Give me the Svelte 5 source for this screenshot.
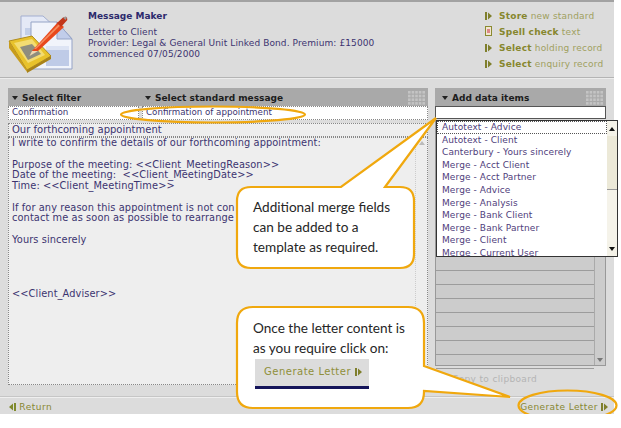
<script>
  const links = [
    { strong: 'Store', rest: 'new standard', icon: 'arrow' },
    { strong: 'Spell check', rest: 'text', icon: 'doc' },
    { strong: 'Select', rest: 'holding record', icon: 'arrow' },
    { strong: 'Select', rest: 'enquiry record', icon: 'arrow' }
  ];
  const items = [
    'Autotext - Advice', 'Autotext - Client', 'Canterbury - Yours sincerely',
    'Merge - Acct Client', 'Merge - Acct Partner', 'Merge - Advice', 'Merge - Analysis',
    'Merge - Bank Client', 'Merge - Bank Partner', 'Merge - Client', 'Merge - Current User'
  ];
  // the callout covers the ends of the two long lines, so they stop where it starts
  const letter = [
    'I write to confirm the details of our forthcoming appointment:',
    '',
    'Purpose of the meeting: <<Client_MeetingReason>>',
    'Date of the meeting:  <<Client_MeetingDate>>',
    'Time: <<Client_MeetingTime>>',
    '',
    'If for any reason this appointment is not con',
    'contact me as soon as possible to rearrange',
    '',
    'Yours sincerely',
    '', '', '', '',
    '<<Client_Adviser>>'
  ];
  const rows = Array(8);
</script>

{#snippet dots()}
  <svg class="dots" width="18" height="15" viewBox="0 0 18 15">
    {#each [0, 1, 2, 3] as r}
      {#each [0, 1, 2, 3, 4] as c}
        <rect x={c * 3.6} y={r * 3.7} width="2.6" height="2.6" fill="#c4c4c4" />
      {/each}
    {/each}
  </svg>
{/snippet}

{#snippet play(back = false)}
  <svg class="play" width="7" height="8" viewBox="0 0 7 8">
    {#if back}
      <path d="M5 0v8h2V0zM4 .5v7L0 4z" fill="#7f8a2c" />
    {:else}
      <path d="M0 0v8h2V0zM3 .5v7L7 4z" fill="#7f7f2c" />
    {/if}
  </svg>
{/snippet}

<div class="app">
  <header>
    <svg class="logo" width="70" height="62" viewBox="6 12 70 62">
      <path d="M21 16h22l11 10v34H21z" fill="#e4e9f6" stroke="#a3afd0" />
      <rect x="25" y="28" width="10" height="7" fill="#c3cfe8" />
      <path d="M31 22h26l15 17v30H31z" fill="#f1f4fb" stroke="#95a3c6" />
      <path d="M57 22v17h15z" fill="#c1cdea" stroke="#95a3c6" />
      <rect x="46" y="46" width="23" height="20" fill="#bfcbe7" />
      <rect x="46" y="46" width="23" height="4" fill="#dde4f4" />
      <path d="M9 41 32 36 51 56 27 70z" fill="#e8c22c" stroke="#b08c1c" />
      <path d="M14 43 32 39 45 55 28 63z" fill="#f3dc72" />
      <path d="M20 47 32 44 41 54 28 60z" fill="#8f8d7e" />
      <path d="M9 41v7l18 24v-2z" fill="#c89c1c" />
      <path d="M27 70v3L51 59v-3z" fill="#a8821a" />
      <path d="M32 51 58 22l6 5-26 24z" fill="#e8481c" />
      <path d="M34 49 59 24l1.500 1.200L36 49z" fill="#f58a5c" />
      <path d="M57 23 63 17.500q3-1.500 4 0 1 2-1 4L61 27z" fill="#c2361a" />
      <path d="M63 17.500q3-1.500 4 0l-1.500 2.500z" fill="#9a9a9a" />
      <path d="M32 51l-2.500 5 8.500-5z" fill="#eed6b0" />
    </svg>
    <div class="title">
      <h1>Message Maker</h1>
      <p>Letter to Client</p>
      <p>Provider: Legal &amp; General Unit Linked Bond. Premium: £15000</p>
      <p>commenced 07/05/2000</p>
    </div>
    <ul class="links">
      {#each links as l}
        <li>
          {#if l.icon === 'doc'}
            <svg class="play" width="7" height="10" viewBox="0 0 7 10">
              <rect x=".5" y=".5" width="6" height="9" fill="#f2e6d0" stroke="#8a8a30" />
              <rect x="2" y="3" width="3" height="4" fill="#d88" />
            </svg>
          {:else}
            {@render play()}
          {/if}
          <b>{l.strong}</b> {l.rest}
        </li>
      {/each}
    </ul>
  </header>

  <main>
    <section class="left">
      <div class="bar">
        <span class="filter-head"><i class="caret"></i>Select filter</span>
        <span class="grow"><i class="caret"></i>Select standard message</span>
        {@render dots()}
      </div>
      <div class="selects">
        <div class="field">Confirmation</div>
        <div class="field">Confirmation of appointment</div>
      </div>
      <div class="field subject">Our forthcoming appointment</div>
      <div class="letter">
        <div class="lines">
          {#each letter as line}
            <div class="line">{line}</div>
          {/each}
        </div>
        <div class="track"><i class="caret up"></i></div>
      </div>
    </section>

    <section class="right">
      <div class="bar"><span class="grow"><i class="caret"></i>Add data items</span>{@render dots()}</div>
      <div class="input"></div>
      <div class="stack">
        <div class="rows">
          {#each rows as _}<div class="row"></div>{/each}
        </div>
        <div class="rows-track"><i class="caret small"></i></div>
        <div class="list">
          <ul>
            {#each items as item, i}
              <li class:active={i === 0}>{item}</li>
            {/each}
          </ul>
          <div class="scroll">
            <span class="sbtn"><i class="caret up black"></i></span>
            <span class="thumb"></span>
            <span class="rest"></span>
            <span class="sbtn end"><i class="caret black"></i></span>
          </div>
        </div>
      </div>
      <div class="copy">Copy to clipboard</div>
    </section>
  </main>

  <footer>
    <span class="foot-link back">{@render play(true)} Return</span>
    <span class="foot-link">Generate Letter {@render play()}</span>
  </footer>

  <svg class="marks" width="621" height="428" viewBox="0 0 621 428">
    <g fill="none" stroke="#f0a80e" stroke-width="2.2">
      <ellipse cx="213" cy="114.5" rx="92" ry="8" />
      <ellipse cx="567.5" cy="405.5" rx="49" ry="15" />
      <path fill="#fff" d="M251 187H341L436 118 385 187H400Q414 187 414 201V254Q414 268 400 268H251Q237 268 237 254V201Q237 187 251 187Z" />
      <path fill="#fff" d="M253 307H408Q424 307 424 323V366L510 397 424 391V392Q424 408 408 408H253Q237 408 237 392V323Q237 307 253 307Z" />
    </g>
  </svg>

  <div class="callout one">Additional merge fields can be added to a template as required.</div>
  <div class="callout two">
    Once the letter content is as you require click on:
    <div class="sample"><span>Generate Letter {@render play()}</span></div>
  </div>
</div>

<style>
  :global(body) {
    background: #fff;
  }

  .app {
    position: relative;
    width: 614px;
    height: 414px;
    background: #dcdcdc;
    border-top: 2px solid #a2a2a2;
    box-sizing: border-box;
    display: flex;
    flex-direction: column;
    overflow: visible;
    font: 9px/12px "DejaVu Sans", Verdana, sans-serif;
    color: #3c3470;
  }

  header {
    display: flex;
    height: 75px;
    border-bottom: 1px solid #b4b4b4;
    box-shadow: 0 1px 0 #ececec;
    flex: none;
  }

  .logo {
    margin: 10px 0 0 6px;
    flex: none;
  }

  .title {
    margin: 8px 0 0 12px;
    flex: 1;
    letter-spacing: 0.1px;
  }

  h1 {
    margin: 0 0 5px;
    font-size: 9px;
    line-height: 12px;
    color: #2c2a6c;
    letter-spacing: 0;
  }

  .title p {
    margin: 0;
    line-height: 11px;
  }

  .links {
    list-style: none;
    margin: 7px 0 0;
    padding: 0;
    width: 129px;
    color: #a0a060;
    letter-spacing: 0.2px;
  }

  .links li {
    height: 16px;
    line-height: 14px;
    white-space: nowrap;
  }

  .links b {
    color: #87872e;
    margin-left: 4px;
  }

  .play {
    vertical-align: -1px;
  }

  main {
    flex: 1;
    display: flex;
    gap: 7px;
    padding: 10px 8px 0;
    min-height: 0;
  }

  .left {
    width: 420px;
    display: flex;
    flex-direction: column;
  }

  .right {
    width: 171px;
    display: flex;
    flex-direction: column;
  }

  .bar {
    height: 18px;
    flex: none;
    background: #a9a9a9;
    display: flex;
    align-items: center;
    padding: 2px 2px 0 4px;
    font-weight: bold;
    color: #1c1c1c;
    box-sizing: border-box;
  }

  .right .bar {
    padding-left: 7px;
  }

  .filter-head {
    width: 133px;
  }

  .grow {
    flex: 1;
  }

  .caret {
    display: inline-block;
    width: 0;
    height: 0;
    margin-right: 4px;
    border: 3px solid transparent;
    border-top: 4px solid #222;
    border-bottom: 0;
    vertical-align: 1px;
  }

  .caret.up {
    border-top: 0;
    border-bottom: 4px solid #bbb;
    margin: 0;
  }

  .caret.black {
    margin: 0;
    border-top-color: #111;
  }

  .caret.up.black {
    border-bottom-color: #111;
  }

  .caret.small {
    margin: 0;
    border-top-color: #777;
  }

  .selects {
    display: flex;
    flex: none;
    gap: 3px;
  }

  .field {
    height: 12px;
    line-height: 11px;
    background: #fff;
    border: 1px dotted #888;
    padding-left: 3px;
    box-sizing: content-box;
    white-space: nowrap;
  }

  .selects .field {
    font-size: 8.7px;
  }

  .selects .field:first-child {
    width: 126px;
  }

  .selects .field:last-child {
    flex: 1;
  }

  .subject {
    margin-top: 3px;
    background: #eee;
    font-size: 10px;
  }

  .letter {
    flex: 1;
    min-height: 0;
    background: #eee;
    border: 1px dotted #888;
    display: flex;
    justify-content: space-between;
    margin-bottom: 11px;
  }

  .lines {
    margin-left: 3px;
    font-size: 9.8px;
    line-height: 10.75px;
    letter-spacing: 0.1px;
    display: flex;
    flex-direction: column;
    align-items: flex-start;
  }

  .line {
    height: 10.75px;
    white-space: pre;
  }

  .track {
    width: 11px;
    border-left: 1px dotted #ccc;
    text-align: center;
    line-height: 10px;
  }

  .input {
    height: 11px;
    flex: none;
    background: #fff;
    border: 1px solid #555;
    margin-bottom: 1px;
  }

  .stack {
    position: relative;
    height: 246px;
    flex: none;
    display: flex;
    background: #ccc;
    border: 1px solid #999;
    border-top: 0;
    box-sizing: border-box;
    padding-top: 137px;
  }

  .rows {
    flex: 1;
  }

  .row {
    height: 13px;
    border-bottom: 1px solid #9c9c9c;
  }

  .rows-track {
    width: 10px;
    border-left: 1px solid #aaa;
    display: flex;
    align-items: flex-end;
    justify-content: center;
    padding-bottom: 3px;
  }

  .list {
    position: absolute;
    left: 0;
    top: 0;
    width: 182px;
    height: 137px;
    background: #fff;
    border: 1px solid #333;
    box-sizing: border-box;
    display: flex;
    overflow: hidden;
  }

  .list ul {
    list-style: none;
    margin: 0;
    padding: 0;
    flex: 1;
    color: #50407c;
    letter-spacing: 0.1px;
  }

  .list li {
    height: 12.6px;
    line-height: 12.6px;
    padding-left: 5px;
    white-space: nowrap;
  }

  .list li.active {
    outline: 1px dotted #555;
    outline-offset: -1px;
  }

  .scroll {
    width: 10px;
    display: flex;
    flex-direction: column;
    background: #ece9d8;
  }

  .sbtn {
    height: 15px;
    background: #f4f2e8;
    display: flex;
    align-items: center;
    justify-content: center;
  }

  .thumb {
    height: 53px;
    border-bottom: 1px solid #999;
  }

  .rest {
    flex: 1;
    background: #f5f3ea;
  }

  .copy {
    margin: 7px 0 0 17px;
    color: #b4b4b4;
    letter-spacing: 0.35px;
  }

  footer {
    flex: none;
    height: 18px;
    border-top: 1px solid #c6c6c6;
    box-shadow: inset 0 1px 0 #efefef;
    display: flex;
    justify-content: space-between;
    align-items: center;
    padding: 3px 6px 0 9px;
    color: #878732;
    box-sizing: border-box;
    letter-spacing: 0.4px;
  }

  .back {
    letter-spacing: 0.5px;
  }

  .marks {
    position: absolute;
    left: 0;
    top: -2px;
    pointer-events: none;
  }

  .callout {
    position: absolute;
    color: #262626;
    font: 13.6px/20px Lato, "Open Sans", sans-serif;
  }

  .one {
    left: 253px;
    top: 195px;
    width: 150px;
  }

  .two {
    left: 253px;
    top: 316px;
    width: 165px;
  }

  .sample {
    margin: 1px 0 0 2px;
    width: 114px;
    height: 30px;
    background: #dcdcdc;
    border-bottom: 3px solid #14145a;
    box-sizing: border-box;
    font: 10px/25px "DejaVu Sans", Verdana, sans-serif;
    letter-spacing: 0.5px;
    color: #8f8f3a;
    padding-left: 9px;
    white-space: nowrap;
  }
</style>
